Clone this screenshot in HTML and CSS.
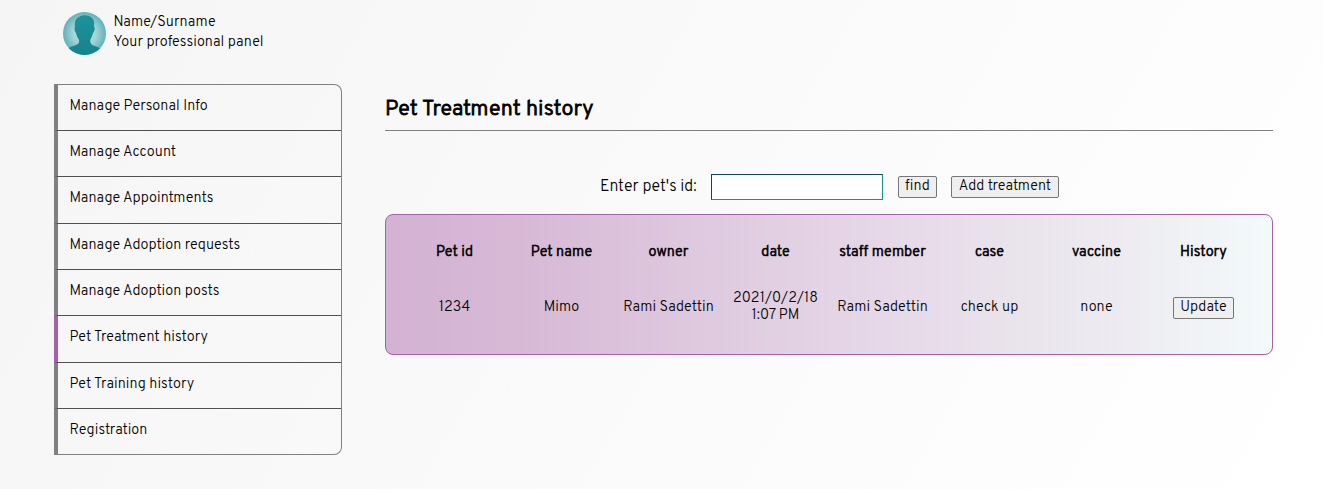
FILE: index.html
```html
<!DOCTYPE html>
<html lang="en">
<head>
<meta charset="utf-8">
<title>Pet Treatment history</title>
<link rel="stylesheet" href="styles.css">
</head>
<body>
<header class="profile">
  <svg class="avatar" viewBox="0 0 43 43">
    <defs>
      <radialGradient id="halo"><stop offset="0" stop-color="#c5e3e4"/><stop offset=".55" stop-color="#a3d3d5"/><stop offset="1" stop-color="#5fb3b8"/></radialGradient>
      <linearGradient id="figure" x2="0" y2="1"><stop offset="0" stop-color="#1b939b"/><stop offset="1" stop-color="#17838b"/></linearGradient>
      <clipPath id="disc"><circle cx="21.5" cy="21.5" r="21.5"/></clipPath>
    </defs>
    <g clip-path="url(#disc)">
      <rect width="43" height="43" fill="url(#halo)"/>
      <path fill="url(#figure)" d="M16 5C19 2.500 25.500 2.500 28.500 5.500C31.500 8 31.500 11 31 14.500C32.500 15.500 31.500 20 30 21C29.500 24 28 26 27.300 28C27 32 29 33.300 33 34.500C36 35.500 38 36 39 38V43H3V38C5 36 7 35 10 34C15 32.500 16.500 31.500 16 28C15 26 13.500 24 13 21C11.500 19 11 16 12 14.500C11.500 10 12 7 16 5Z"/>
    </g>
  </svg>
  <div class="profile-text">
    <div class="name">Name/Surname</div>
    <div class="panel-title">Your professional panel</div>
  </div>
</header>
<div class="layout">
  <nav class="menu">
    <a class="item">Manage Personal Info</a>
    <a class="item">Manage Account</a>
    <a class="item">Manage Appointments</a>
    <a class="item">Manage Adoption requests</a>
    <a class="item">Manage Adoption posts</a>
    <a class="item active">Pet Treatment history</a>
    <a class="item">Pet Training history</a>
    <a class="item">Registration</a>
  </nav>
  <main class="content">
    <h1>Pet Treatment history</h1>
    <form class="search">
      <label for="pet">Enter pet's id:</label>
      <input id="pet" type="text">
      <button class="find" type="button">find</button>
      <button class="add" type="button">Add treatment</button>
    </form>
    <section class="card">
      <div class="row head">
        <div>Pet id</div><div>Pet name</div><div>owner</div><div>date</div><div>staff member</div><div>case</div><div>vaccine</div><div>History</div>
      </div>
      <div class="row data">
        <div>1234</div><div>Mimo</div><div>Rami Sadettin</div><div>2021/0/2/18<br>1:07 PM</div><div>Rami Sadettin</div><div>check up</div><div>none</div><div><button class="update" type="button">Update</button></div>
      </div>
    </section>
  </main>
</div>
</body>
</html>
```
FILE: styles.css
```css
* { box-sizing: border-box; }
body {
  margin: 0;
  height: 489px;
  padding: 12px 50px 0 54px;
  overflow: hidden;
  background: linear-gradient(120deg, #f5f5f5, #fff);
  color: #000;
  font-family: Overpass, Roboto, "Liberation Sans", sans-serif;
  font-size: 14.4px;
  font-weight: 300;
  letter-spacing: .06px;
}
.profile { display: flex; height: 72px; padding-left: 9px; }
.avatar { width: 43px; height: 43px; }
.profile-text { margin-left: 7.500px; padding-top: 1px; line-height: 20px; white-space: nowrap; }
.layout { display: flex; align-items: flex-start; gap: 43px; }
.menu {
  display: grid;
  grid-template-rows: 46.05px repeat(6, 46.35px) 1fr;
  width: 288px;
  height: 371px;
  border: 1px solid #808080;
  border-left: 0;
  border-radius: 0 8px 8px 0;
}
.item {
  padding: 13px 0 0 11.500px;
  line-height: 18px;
  border-left: 4px solid #808080;
  border-bottom: 1px solid #505050;
}
.item:last-child { border-bottom: 0; }
.active { border-left-color: #a860a8; }
.content { width: 888px; }
h1 {
  margin: 0;
  height: 47px;
  padding-top: 11px;
  font-size: 21.6px;
  line-height: 30px;
  font-weight: 300;
  letter-spacing: .12px;
  -webkit-text-stroke: .9px #000;
  border-bottom: 1px solid #808080;
}
.search {
  display: flex;
  align-items: center;
  height: 26px;
  margin: 43px 0 14px 215px;
}
label { width: 96px; font-size: 16px; line-height: 24px; letter-spacing: 0; white-space: nowrap; }
input {
  width: 172px;
  height: 26px;
  margin: 0 15px;
  padding: 0 2px;
  border: 1px solid #179090;
  border-top-color: #054b50;
  border-left-color: #054b50;
  background: #fff;
}
button {
  height: 22px;
  padding: 0;
  font: inherit;
  line-height: 18px;
  letter-spacing: inherit;
  color: #000;
  background: #efefef;
  border: 1px solid #767676;
  border-radius: 2px;
  white-space: nowrap;
}
.find { width: 39px; }
.add { width: 108px; margin-left: 14px; }
.update { width: 61px; display: block; }
.card {
  height: 141px;
  padding: 28px 15px 0;
  border: 1px solid #a860a8;
  border-radius: 8px;
  background: linear-gradient(90deg, #d3b2d2, #d7b9d6 15%, #dec9de 35%, #e8dcea 62%, #e9e3eb 70%, #edebf1 83%, #f3fafa);
}
.row { display: grid; grid-template-columns: repeat(8, 107px); justify-items: center; align-items: center; text-align: center; white-space: nowrap; }
.head { height: 18px; -webkit-text-stroke: .6px #000; }
.data { height: 34px; margin-top: 29px; line-height: 17px; }
.data .update { margin-top: 1px; }
```
